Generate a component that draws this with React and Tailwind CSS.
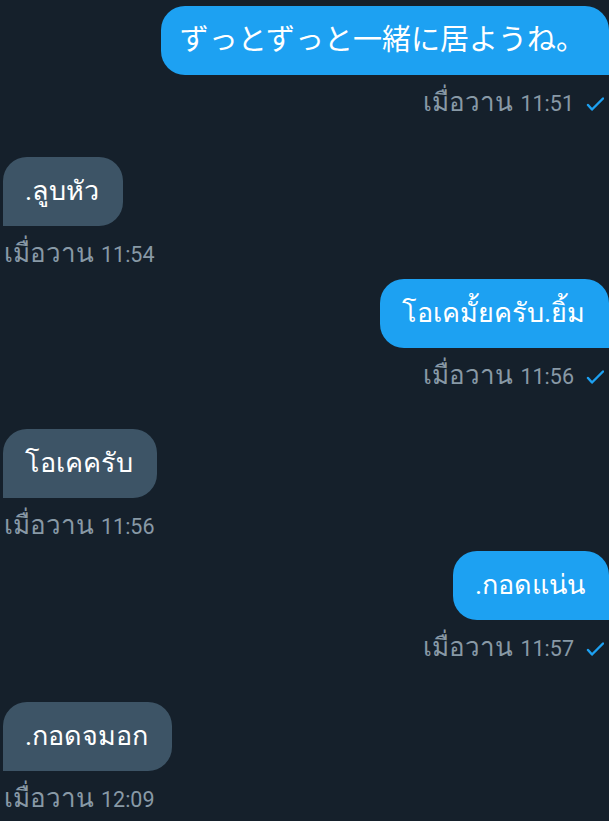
import React from "react";

const FONT = { fontFamily: 'Roboto, "Noto Sans", "Noto Sans CJK JP", sans-serif' };

function Check() {
  return (
    <svg width="18" height="14" viewBox="0 0 18 14" className="ml-[12px] mt-[2px]">
      <path d="M2 8 L6 12.5 L17 1.5" fill="none" stroke="#1da1f2" strokeWidth="2.4" strokeLinecap="round" strokeLinejoin="round" />
    </svg>
  );
}

function Time({ day, time }) {
  return (
    <span className="flex items-baseline">
      <span className="text-[26px]">{day}</span>
      <span className="text-[21.5px] ml-[7px]">{time}</span>
    </span>
  );
}

function Sent({ text, day, time, mt, size = "text-[27px]", pl = "pl-[22px]" }) {
  return (
    <div className={`flex flex-col items-end ${mt}`}>
      <div className={`h-[69px] flex items-center bg-[#1da1f2] text-white ${size} ${pl} pr-[24px] rounded-t-[24px] rounded-bl-[24px] rounded-br-none whitespace-nowrap`}>
        {text}
      </div>
      <div className="mt-[14px] h-[28px] flex items-center pr-[5px] leading-[28px] text-[#8899a6]">
        <Time day={day} time={time} />
        <Check />
      </div>
    </div>
  );
}

function Received({ text, day, time, mt }) {
  return (
    <div className={`flex flex-col items-start ${mt}`}>
      <div className="h-[69px] flex items-center bg-[#3d5466] text-white text-[27px] pl-[22px] pr-[24px] rounded-t-[24px] rounded-br-[24px] rounded-bl-none whitespace-nowrap">
        {text}
      </div>
      <div className="mt-[14px] h-[28px] flex items-center pl-[1px] leading-[28px] text-[#8899a6]">
        <Time day={day} time={time} />
      </div>
    </div>
  );
}

export default function App() {
  return (
    <div className="w-[609px] h-[821px] bg-[#15202b] overflow-hidden pl-[3px] pt-[6px]" style={FONT}>
      <Sent text="ずっとずっと一緒に居ようね。" day="เมื่อวาน" time="11:51" mt="" size="text-[29px]" pl="pl-[19px]" />
      <Received text=".ลูบหัว" day="เมื่อวาน" time="11:54" mt="mt-[40px]" />
      <Sent text="โอเคมั้ยครับ.ยิ้ม" day="เมื่อวาน" time="11:56" mt="mt-[11px]" />
      <Received text="โอเคครับ" day="เมื่อวาน" time="11:56" mt="mt-[39px]" />
      <Sent text=".กอดแน่น" day="เมื่อวาน" time="11:57" mt="mt-[11px]" />
      <Received text=".กอดจมอก" day="เมื่อวาน" time="12:09" mt="mt-[40px]" />
    </div>
  );
}
